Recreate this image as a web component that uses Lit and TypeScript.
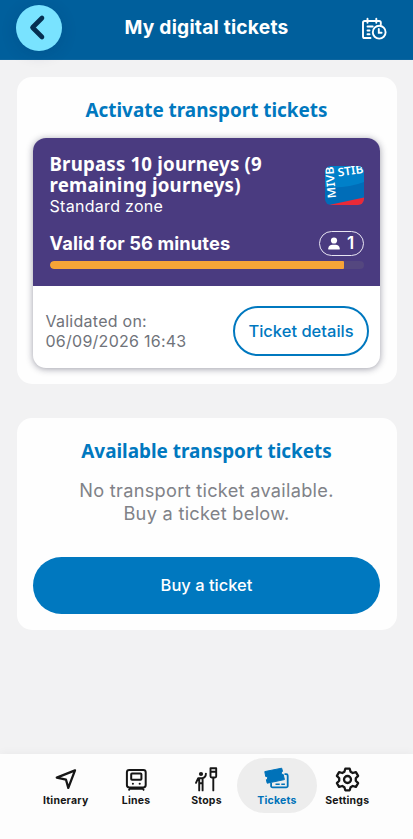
import { LitElement, html, css, svg } from "lit";
import { customElement } from "lit/decorators.js";
import { classMap } from "lit/directives/class-map.js";

const icons = {
  itinerary: svg`<path d="M22 3.400 3.800 10.600 13 12.700 15.300 20.900z" fill="none" stroke="currentColor" stroke-width="2.3" stroke-linejoin="round"/>`,
  lines: svg`<g fill="none" stroke="currentColor" stroke-width="2"><rect x="2.900" y="2.900" width="18.800" height="17.600" rx="2.400"/><rect x="7.200" y="6.400" width="10.200" height="6.400" rx=".8"/><path d="M6.400 20.800 4.600 23.400M18.200 20.800l1.800 2.600M6 21.800h12.600" stroke-width="1.800"/></g><circle cx="8.900" cy="16.700" r="1.050" fill="currentColor"/><circle cx="15.700" cy="16.700" r="1.050" fill="currentColor"/>`,
  stops: svg`<circle cx="7" cy="7" r="2.100" fill="currentColor"/><g fill="none" stroke="currentColor" stroke-width="1.900" stroke-linecap="round" stroke-linejoin="round"><path d="M2 15.800 4.200 11.200h4.200c2.600-.5 3.500-2 3.500-4.600M5.200 11.400v12M8.600 11.400v12M5.200 16.200h3.400"/><path d="M16.500 1.300h5.700v8a1.200 1.200 0 0 1-1.200 1.200h-3.300a1.200 1.200 0 0 1-1.200-1.200zM16.500 4.800h5.700M19.300 10.700v12.700"/></g>`,
  tickets: svg`<path d="M20.500 7.200h1.700a1.500 1.500 0 0 1 1.500 1.500v10.200a1.500 1.500 0 0 1-1.500 1.500H8.600a1.500 1.500 0 0 1-1.500-1.500v-3" fill="none" stroke="currentColor" stroke-width="1.800"/><path d="M11.500 17.200h4.200M17.300 17.200h3.600" stroke="currentColor" stroke-width="1.500"/><path d="M.8 4.600 17.700 1.200l.8 3.200a1.500 1.500 0 0 0 .7 3l1.200 5.200L3.200 16.200l-.8-3.500a1.500 1.500 0 0 0-.7-3.200z" fill="currentColor" stroke="currentColor" stroke-width="1" stroke-linejoin="round"/>`,
  settings: svg`<path d="M10.300 1.700h4.400l.9 3.100 2.100 1.200 3.200-.9 2.200 3.800-2.300 2.400v2.400l2.300 2.400-2.200 3.800-3.200-.9-2.100 1.200-.9 3.100h-4.400l-.9-3.100-2.100-1.200-3.200.9-2.200-3.800 2.300-2.400v-2.400L1.900 8.900l2.200-3.800 3.200.9 2.100-1.200z" fill="none" stroke="currentColor" stroke-width="2.300" stroke-linejoin="round"/><circle cx="12.500" cy="12.500" r="3.500" fill="none" stroke="currentColor" stroke-width="2.300"/>`,
};

const tabs = [
  { icon: icons.itinerary, label: "Itinerary" },
  { icon: icons.lines, label: "Lines" },
  { icon: icons.stops, label: "Stops" },
  { icon: icons.tickets, label: "Tickets", active: true },
  { icon: icons.settings, label: "Settings" },
];

@customElement("tab-bar")
class TabBar extends LitElement {
  static styles = css`
    :host { display: block; height: 85px; background: #fdfdfd; box-shadow: 0 -2px 8px rgba(0, 0, 0, .03); }
    nav { display: grid; grid-template-columns: repeat(5, 70.4px); justify-content: center; padding: 4px 0 0; }
    .tab { display: flex; flex-direction: column; align-items: center; height: 55px; width: 80px; justify-self: center; border-radius: 28px; color: #161616; }
    .tab.active { background: #ededed; color: #0072b9; }
    svg { width: 25px; height: 25px; margin-top: 8.5px; }
    span { font: 700 10.5px/14px Inter, sans-serif; letter-spacing: .22px; margin-top: 2.5px; white-space: nowrap; }
  `;
  render() {
    return html`<nav>${tabs.map(t => html`<div class=${classMap({ tab: true, active: !!t.active })}>
      <svg viewBox="0 0 25 25">${t.icon}</svg><span>${t.label}</span></div>`)}</nav>`;
  }
}

@customElement("ticket-card")
class TicketCard extends LitElement {
  static styles = css`
    :host { display: block; height: 230px; border-radius: 13px; overflow: hidden; background: #fff; box-shadow: 0 1px 7px rgba(25, 25, 50, .42); font-family: Inter, sans-serif; }
    .top { height: 148px; box-sizing: border-box; background: #4a3b80; color: #fff; padding: 15px 16px 0 16.500px; }
    .heading { display: flex; justify-content: space-between; height: 77px; }
    h3 { margin: 0; font: 700 18.700px/21px "Noto Sans", sans-serif; letter-spacing: .18px; white-space: nowrap; }
    .zone { font-size: 16px; line-height: 20px; letter-spacing: .3px; margin-top: 1px; }
    .logo { width: 39px; height: 39px; margin-top: 13px; }
    .validity { display: flex; justify-content: space-between; align-items: center; height: 26px; }
    .valid { font-size: 18.300px; font-weight: 700; letter-spacing: .1px; }
    .people { display: flex; align-items: center; box-sizing: border-box; gap: 7px; width: 45px; height: 25px; border: 1.300px solid #e8e5f2; border-radius: 13px; padding-left: 8px; font-size: 17px; font-weight: 600; }
    .people svg { width: 12px; height: 13px; }
    .track { height: 8px; margin-top: 5px; border-radius: 4px; background: #54477f; overflow: hidden; }
    .fill { height: 8px; background: #f6a437; border-radius: 4px 1px 1px 4px; }
    .bottom { display: flex; height: 82px; justify-content: space-between; padding: 20px 11px 0 12.500px; box-sizing: border-box; }
    .date { font-size: 16px; line-height: 20px; letter-spacing: .26px; color: #70737a; margin-top: 5px; white-space: nowrap; }
    .details { display: flex; align-items: center; justify-content: center; box-sizing: border-box; width: 136px; height: 50px; padding-bottom: 1px; border: 2px solid #0078bf; border-radius: 26px; color: #0078bf; font-size: 16.500px; font-weight: 500; }
  `;
  render() {
    const remaining = 93.7;
    return html`
      <div class="top">
        <div class="heading">
          <div><h3>Brupass 10 journeys (9<br>remaining journeys)</h3><div class="zone">Standard zone</div></div>
          <svg class="logo" viewBox="0 0 39 39">
            <defs><clipPath id="tile"><rect width="39" height="39" rx="6"/></clipPath></defs>
            <g clip-path="url(#tile)">
              <rect width="39" height="39" fill="#006db8"/>
              <path d="M0 0h39v16Q21 23 0 21z" fill="#0080c9"/>
              <path d="M4 39 39 31.500V39z" fill="#eb2937"/>
              <g fill="#fff" font-family="Noto Sans, sans-serif" font-weight="600" font-size="11.500">
                <text transform="translate(13.200 10.500) rotate(-8)" textLength="26" lengthAdjust="spacingAndGlyphs">STIB</text>
                <text transform="translate(11 32) rotate(-95)" textLength="32" lengthAdjust="spacingAndGlyphs">MIVB</text>
              </g>
            </g>
          </svg>
        </div>
        <div class="validity"><span class="valid">Valid for 56 minutes</span>
          <span class="people"><svg viewBox="0 0 12 13"><circle cx="6" cy="3.500" r="3.100" fill="#fff"/><path d="M.3 12.500v-1.300Q.7 8 4.500 7.800h3Q11.300 8 11.700 11.200v1.300z" fill="#fff"/></svg>1</span></div>
        <div class="track"><div class="fill" style="width:${remaining}%"></div></div>
      </div>
      <div class="bottom"><div class="date">Validated on:<br>06/09/2026 16:43</div><div class="details">Ticket details</div></div>`;
  }
}

@customElement("app-root")
class AppRoot extends LitElement {
  static styles = css`
    :host { display: flex; flex-direction: column; height: 839px; background: #f2f2f3; font-family: Inter, sans-serif; overflow: hidden; }
    header { display: grid; grid-template-columns: 46px 1fr 46px; align-items: center; box-sizing: border-box; height: 60px; padding: 0 16px 4px; background: #005f9c; border-bottom: 1px solid #0c659f; flex: none; }
    .back { width: 46px; height: 46px; border-radius: 50%; background: #79e3ff; box-shadow: 0 3px 16px rgba(0, 35, 80, .16); display: flex; }
    .back svg { width: 46px; height: 46px; }
    h1 { margin: 0 0 1px; text-align: center; font-size: 19.200px; font-weight: 700; letter-spacing: .22px; color: #fff; white-space: nowrap; }
    .history { width: 26px; height: 24px; justify-self: end; margin: 2px 10.500px 0 0; }
    main { flex: 1; padding: 17px 16px 0 17px; }
    section { box-sizing: border-box; border-radius: 15px; background: #fefefe; padding: 20px 17px 0 16px; }
    .activate { height: 307px; }
    .available { height: 212px; margin-top: 34px; }
    h2 { margin: 0; text-align: center; color: #0078bf; font: 700 18.900px/26px "Noto Sans", sans-serif; white-space: nowrap; }
    ticket-card { margin-top: 15px; }
    p { margin: 15px 0 0; color: #808288; font-size: 18.200px; line-height: 23px; text-align: center; letter-spacing: .28px; }
    .buy { display: flex; align-items: center; justify-content: center; height: 57px; box-sizing: border-box; padding-bottom: 1px; margin-top: 32px; border-radius: 29px; background: #0078bf; color: #fff; font-size: 16.500px; font-weight: 500; }
    tab-bar { flex: none; }
  `;
  render() {
    return html`
      <header>
        <div class="back"><svg viewBox="0 0 46 46"><path d="M26.500 13.500 17 23l9.500 9.500" transform="translate(-.5 -.5)" fill="none" stroke="#062f51" stroke-width="4.600" stroke-linecap="round" stroke-linejoin="round"/></svg></div>
        <h1>My digital tickets</h1>
        <svg class="history" viewBox="0 0 26 24" fill="none" stroke="#fff" stroke-width="1.900" stroke-linecap="round">
          <path d="M9.500 21H3.600a1.600 1.600 0 0 1-1.600-1.600V5.600A1.600 1.600 0 0 1 3.600 4h14.600a1.600 1.600 0 0 1 1.600 1.600v1.600M6.500 1.800v4M15.300 1.800v4M6.500 9.500h5.200M6.500 13.500h2M6.500 17.200h2"/>
          <circle cx="18.200" cy="15.200" r="6.400"/><path d="M17.800 12v3.800h2.800"/>
        </svg>
      </header>
      <main>
        <section class="activate"><h2>Activate transport tickets</h2><ticket-card></ticket-card></section>
        <section class="available"><h2>Available transport tickets</h2>
          <p>No transport ticket available.<br>Buy a ticket below.</p><div class="buy">Buy a ticket</div></section>
      </main>
      <tab-bar></tab-bar>`;
  }
}
